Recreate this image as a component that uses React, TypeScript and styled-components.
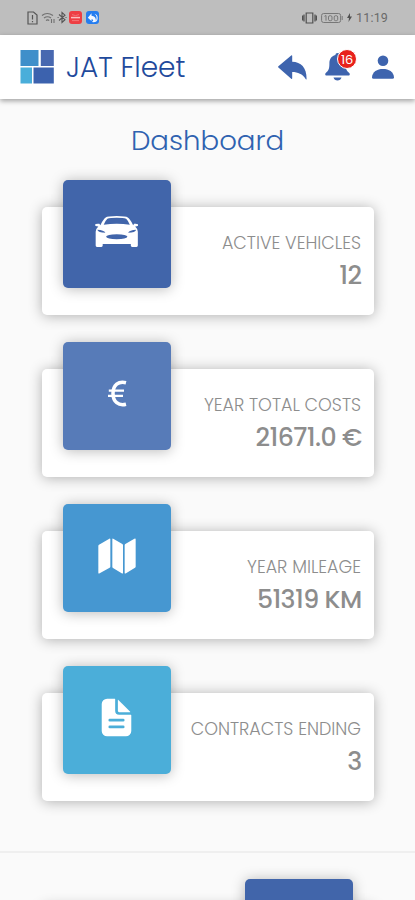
import React from 'react';
import styled, { createGlobalStyle } from 'styled-components';
import { IoDocumentText } from 'react-icons/io5';

const GlobalStyle = createGlobalStyle`
  * { box-sizing: border-box; }
  html, body { margin: 0; background: #fafafa; overflow: hidden; }
  body { font-family: Poppins, Inter, sans-serif; }
  svg { display: block; flex: none; }
`;

const Screen = styled.div`
  display: flex;
  flex-direction: column;
  width: 415px;
  height: 900px;
  overflow: hidden;
  background: #fafafa;
`;

const StatusBar = styled.div`
  display: flex;
  flex: none;
  align-items: center;
  justify-content: space-between;
  height: 35px;
  padding: 0 27px 0 26px;
  background: #bebebe;
`;

const StatusGroup = styled.div<{ $gap: number }>`
  display: flex;
  align-items: center;
  gap: ${({ $gap }) => $gap}px;
`;

const Clock = styled.span`
  font: 400 12.5px/16px Roboto, sans-serif;
  letter-spacing: 0.15px;
  color: #6a6a6a;
`;

const Header = styled.header`
  z-index: 1;
  display: flex;
  flex: none;
  align-items: center;
  height: 64px;
  padding: 0 21px 0 20px;
  background: #fff;
  box-shadow: 0 2px 5px rgba(0, 0, 0, 0.36);
`;

const Brand = styled.span`
  flex: 1;
  margin-left: 12px;
  padding-top: 1px;
  font-size: 28px;
  line-height: 36px;
  font-weight: 300;
  color: #1f4a9c;
`;

const Actions = styled.nav`
  display: flex;
  align-items: center;
  gap: 18px;
  color: #3e64ae;
`;

const Action = styled.span`
  position: relative;
  display: flex;

  &:last-child {
    margin-left: 4px;
  }
`;

const Badge = styled.span`
  position: absolute;
  top: -4px;
  left: 12px;
  width: 20px;
  height: 20px;
  border: 1px solid #fff;
  border-radius: 50%;
  background: #e8211c;
  color: #fff;
  font-size: 13px;
  line-height: 19px;
  font-weight: 400;
  letter-spacing: -0.3px;
  text-align: center;
`;

const Title = styled.h1`
  flex: none;
  margin: 24px 0 0;
  font-size: 27.6px;
  line-height: 36px;
  font-weight: 300;
  text-align: center;
  color: #2f62b0;
`;

const CardList = styled.main`
  display: flex;
  flex: none;
  flex-direction: column;
  gap: 54px;
  padding: 48px 41px 50px 42px;
`;

const Card = styled.section<{ $reverse?: boolean }>`
  display: flex;
  flex: none;
  flex-direction: ${({ $reverse }) => ($reverse ? 'row-reverse' : 'row')};
  justify-content: space-between;
  height: 108px;
  padding: 0 ${({ $reverse }) => ($reverse ? 21 : 13)}px 0 21px;
  border-radius: 5px;
  background: #fff;
  box-shadow: 0 1px 14px rgba(0, 0, 0, 0.3);
`;

const Tile = styled.div<{ $color: string }>`
  display: flex;
  flex: none;
  align-items: center;
  justify-content: center;
  width: 108px;
  height: 108px;
  margin-top: -27px;
  padding: 0 1px 5px 0;
  border-radius: 5px;
  background: ${({ $color }) => $color};
  box-shadow: 0 1px 14px rgba(0, 0, 0, 0.28);
  color: #fff;
`;

const Stat = styled.div`
  display: flex;
  flex-direction: column;
  align-items: flex-end;
  padding-top: 24px;
  white-space: nowrap;
  color: #8d8d8d;
`;

const Label = styled.span`
  font-size: 17.5px;
  line-height: 24px;
  font-weight: 300;
`;

const Value = styled.span`
  margin-top: 3px;
  margin-right: -0.5px;
  font-size: 25.2px;
  line-height: 36px;
  font-weight: 500;
  letter-spacing: -0.6px;
`;

const Divider = styled.hr`
  flex: none;
  width: 100%;
  height: 2px;
  margin: 0;
  border: 0;
  background: #efefef;
`;

const NextSection = styled.div`
  flex: none;
  padding: 53px 41px 0 42px;
`;

const Logo = () => (
  <svg width="34" height="34" viewBox="0 0 34 34">
    <rect x=".5" width="18" height="16" fill="#3f8fca" />
    <rect x="20.8" width="13" height="16" fill="#4868b0" />
    <rect x=".5" y="17.5" width="11.5" height="16" fill="#4aaeda" />
    <rect x="13.5" y="17.5" width="20.3" height="16" fill="#3c62ae" />
  </svg>
);

const ReplyIcon = () => (
  <svg width="29" height="25" viewBox="0 0 29 25" fill="currentColor">
    <path d="M.4 11.3L13.2.5q1-.7 1 .6v5.600C23 7 28.600 12 28.600 24q0 .7-.8.2C24.400 19 20 17.200 14.200 17.100v6q0 1.300-1 .6L.4 12.500q-.6-.6 0-1.200z" />
  </svg>
);

const BellIcon = () => (
  <svg width="25" height="28" viewBox="0 0 25 28" fill="currentColor">
    <path d="M12.500 0c1.300 0 2 .8 2.100 2 4.100 1 6 4.200 6 8.300 0 5.700.7 7.300 3.600 9.700 1.100 1 .6 2.600-.8 2.600H1.600c-1.400 0-1.900-1.600-.8-2.600 2.900-2.400 3.600-4 3.600-9.700 0-4.100 1.900-7.300 6-8.300.1-1.200.8-2 2.100-2zM8.500 24.500h8c-.5 1.900-2 3-4 3s-3.500-1.100-4-3z" />
  </svg>
);

const PersonIcon = () => (
  <svg width="22" height="24" viewBox="0 0 22 24" fill="currentColor">
    <circle cx="11" cy="5.700" r="5.300" />
    <path d="M0 22.300C.4 16.500 5 13.900 11 13.900s10.600 2.600 11 8.400q0 1.500-1.500 1.500h-19Q0 23.800 0 22.300z" />
  </svg>
);

const CarIcon = () => (
  <svg width="43.5" height="31" viewBox="0 0 130 92" fill="currentColor" fillRule="evenodd">
    <path d="M16 27Q25 9 32 4.500 37 0 65 0t33 4.500Q105 9 114 27L117 23Q129 22 130 26 130 31 120 31 128 38 128 47V88q0 4-4 4h-13q-4 0-4-4v-5H23v5q0 4-4 4H6q-4 0-4-4V47Q2 38 10 31 0 31 0 26 1 22 13 23zM26 26Q65 20 104 26 98 12 93 8 85 5 65 5T37 8Q32 12 26 26zM7 41Q9 50 31 50 27 42 7 41zM123 41Q103 42 99 50 121 50 123 41zM33 62Q36 69 65 69T97 62Q95 54 65 54T33 62z" />
  </svg>
);

const EuroIcon = () => (
  <svg width="20" height="27" viewBox="0 0 20 27" fill="none" stroke="currentColor">
    <path d="M19 2.700C11.500.8 6 5 6 13.500S11.500 26 19 24.200" strokeWidth="3.500" />
    <path d="M1.800 10.700H17M1 15.900h15" strokeWidth="2.300" />
  </svg>
);

const MapIcon = () => (
  <svg width="38" height="36" viewBox="0 0 114 108" fill="currentColor">
    <path d="M3 20L34 2q3-1 3 2v82q0 2-2 3L5 106q-4 2-4-2V24q0-3 2-4zM43 4q0-4 4-1l26 15q2 1 2 4v82q0 4-4 2L45 90q-2-1-2-3zM80 22q0-3 2-4L109 2q4-2 4 2v82q0 2-2 3L84 106q-4 2-4-2z" />
  </svg>
);

const SimIcon = () => (
  <svg width="13" height="14" viewBox="0 0 13 14" fill="none" stroke="#555" strokeWidth="1.2">
    <path d="M2 1h5.500L11 4v9H2zM6.500 4v4.500M6.500 10v1.200" />
  </svg>
);

const WifiIcon = () => (
  <svg width="14" height="13" viewBox="0 0 14 13" fill="none" stroke="#707070" strokeWidth="1.1">
    <path d="M1 4.500Q6 .4 12 4.500M3 7q3.500-2.500 7 0M5 9.500q1.700-1.200 3.200 0M10.500 8v4M13 8v4" />
  </svg>
);

const BluetoothIcon = () => (
  <svg width="10" height="13" viewBox="0 0 10 13" fill="none" stroke="#555" strokeWidth="1.1">
    <path d="M2 3.500l6 5.200-3 2.800v-10l3 2.700-6 5.300M.6 6.500h1M8.500 6.500h1" />
  </svg>
);

const RedAppIcon = () => (
  <svg width="13" height="13" viewBox="0 0 13 13">
    <rect width="13" height="13" rx="3" fill="#ee3e43" />
    <path d="M2 6.600h9" stroke="#fbc0c0" strokeWidth="1.500" />
    <path d="M3 3.600q3.500 2 7 0M3 9.600h7" stroke="#f37578" fill="none" />
  </svg>
);

const BlueAppIcon = () => (
  <svg width="13" height="13" viewBox="0 0 13 13">
    <rect width="13" height="13" rx="3" fill="#257df0" />
    <path d="M1.800 6.700l3.700-4.400v2.400c3 .1 4.700 2.200 4.400 5.300q1.800-4.600-1.300-7.200 3.500.9 3 5.100-.8 3.900-5.700 3.100Q8.700 8.700 5.500 8.300v1.800z" fill="#f4f8ff" />
  </svg>
);

const VibrateIcon = () => (
  <svg width="15" height="12" viewBox="0 0 15 12" fill="none" stroke="#505050" strokeWidth="1.2">
    <path d="M4.200 1h6.600v10H4.200zM2 2.500v7M.6 3.500v5M13 2.500v7M14.400 3.500v5" />
  </svg>
);

const BatteryIcon = () => (
  <svg width="22" height="12" viewBox="0 0 22 12" fill="none" stroke="#777">
    <rect x=".6" y="1.500" width="19" height="9" rx="2" />
    <path d="M21.200 4v4M3.500 4.300L5 3.500v5.200" />
    <rect x="7.500" y="3.700" width="3.500" height="5" rx="1.400" />
    <rect x="13.200" y="3.700" width="3.500" height="5" rx="1.400" />
  </svg>
);

const BoltIcon = () => (
  <svg width="5" height="9" viewBox="0 0 5 9">
    <path d="M3 0L0 5h2L1.500 9 5 3.600H3z" fill="#505050" />
  </svg>
);

const stats = [
  { label: 'ACTIVE VEHICLES', value: '12', color: '#4165aa', icon: <CarIcon /> },
  { label: 'YEAR TOTAL COSTS', value: '21671.0 €', color: '#577bb8', icon: <EuroIcon /> },
  { label: 'YEAR MILEAGE', value: '51319 KM', color: '#4697d1', icon: <MapIcon /> },
  { label: 'CONTRACTS ENDING', value: '3', color: '#4baed9', icon: <IoDocumentText size={43} /> },
];

export default function App() {
  return (
    <Screen>
      <GlobalStyle />
      <StatusBar>
        <StatusGroup $gap={2}>
          <SimIcon />
          <WifiIcon />
          <BluetoothIcon />
          <RedAppIcon />
          <span />
          <BlueAppIcon />
        </StatusGroup>
        <StatusGroup $gap={4}>
          <VibrateIcon />
          <BatteryIcon />
          <BoltIcon />
          <Clock>11:19</Clock>
        </StatusGroup>
      </StatusBar>
      <Header>
        <Logo />
        <Brand>JAT Fleet</Brand>
        <Actions>
          <Action><ReplyIcon /></Action>
          <Action>
            <BellIcon />
            <Badge>16</Badge>
          </Action>
          <Action><PersonIcon /></Action>
        </Actions>
      </Header>
      <Title>Dashboard</Title>
      <CardList>
        {stats.map((s) => (
          <Card key={s.label}>
            <Tile $color={s.color}>{s.icon}</Tile>
            <Stat>
              <Label>{s.label}</Label>
              <Value>{s.value}</Value>
            </Stat>
          </Card>
        ))}
      </CardList>
      <Divider />
      <NextSection>
        <Card $reverse>
          <Tile $color="#4165aa" />
        </Card>
      </NextSection>
    </Screen>
  );
}
